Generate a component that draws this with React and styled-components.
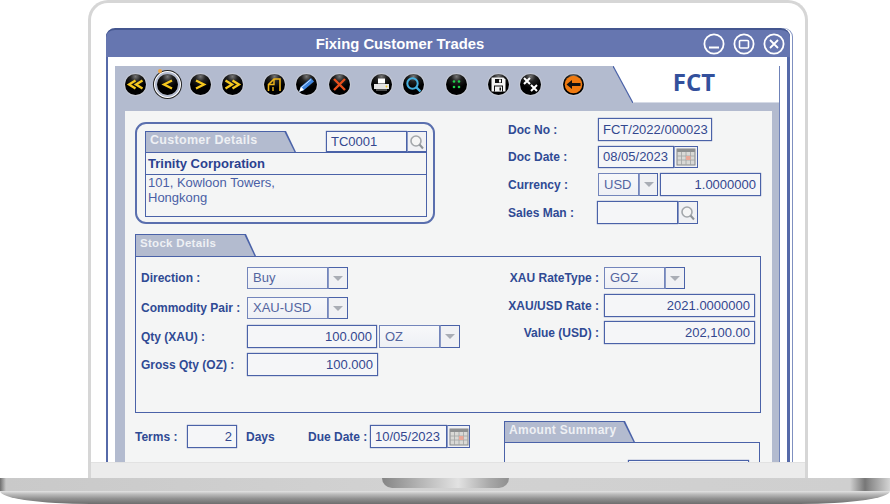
import React from "react";
import styled, { createGlobalStyle } from "styled-components";

const blue = "#4a62a8";
const grey = "#b3bbcf";

const GlobalStyle = createGlobalStyle`
  html, body {
    margin: 0;
    background: #fff;
  }
  body {
    font-family: "Liberation Sans", Arial, sans-serif;
  }
`;

const Page = styled.div`
  width: 890px;
  height: 504px;
  overflow: hidden;
  background: #fff;
`;

const Lid = styled.div`
  box-sizing: border-box;
  width: 720px;
  height: 478px;
  margin-left: 88px;
  border: 3px solid #d6d6d6;
  border-bottom: 0;
  border-radius: 20px 20px 0 0;
  background: #fff;
`;

const Screen = styled.div`
  box-sizing: border-box;
  height: 459px;
  padding: 25px 0 0 15px;
  overflow: hidden;
`;

const Chin = styled.div`
  height: 16px;
  background: #ececec;
  border-top: 1px solid #e2e2e2;
  box-sizing: border-box;
`;

const Base = styled.div`
  position: relative;
  height: 26px;
  overflow: hidden;
  border-radius: 0 0 90px 90px / 0 0 13px 13px;
`;

const BaseTop = styled.div`
  height: 13px;
  background: linear-gradient(
    90deg,
    #6f6f6f 0,
    #c9c9c9 6px,
    #d2d2d2 400px,
    #cfcfcf 850px,
    #777 865px,
    #8c8c8c 870px,
    #d4d4d4 890px
  );
`;

const BaseBottom = styled.div`
  height: 13px;
  background: linear-gradient(180deg, #e3e3e3 0, #bbb 25%, #8f8f8f 60%, #6e6e6e 100%);
`;

const Notch = styled.div`
  position: absolute;
  top: 0;
  left: 382px;
  width: 127px;
  height: 10px;
  border-radius: 0 0 12px 12px;
  background: linear-gradient(90deg, #858585 0, #b5b5b5 30%, #e2e2e2 60%, #a8a8a8 85%, #8f8f8f 100%);
`;

const Window = styled.div`
  box-sizing: border-box;
  width: 684px;
  border-left: 2px solid #566aa9;
  border-right: 3px solid #566aa9;
  border-radius: 9px 9px 0 0;
  background: #fff;
  box-shadow: 2px 0 0 #fff, 3px 0 0 #7f90c0;
`;

const TitleBar = styled.div`
  display: flex;
  align-items: center;
  box-sizing: border-box;
  height: 29px;
  margin: 0 -3px 0 -2px;
  padding-right: 5px;
  border-top: 2px solid #44568f;
  border-radius: 9px 9px 0 0;
  background: #6676b0;
`;

const Title = styled.div`
  flex: 1;
  text-align: center;
  color: #fff;
  font-size: 14.8px;
  font-weight: bold;
`;

const Controls = styled.div`
  display: flex;
  gap: 8px;
  margin-left: 9px;
`;

const Body = styled.div`
  padding: 9px 7px 0;
`;

const Workspace = styled.div`
  background: ${grey};
  border-right: 1px solid #6f82b8;
  padding-bottom: 10px;
`;

const Head = styled.div`
  display: flex;
  justify-content: space-between;
  height: 45px;
`;

const Toolbar = styled.div`
  display: flex;
  gap: 21.3px;
  height: 36px;
  padding-left: 10px;
  align-items: center;
`;

const Group = styled.div`
  display: flex;
  gap: 11.3px;
`;

const Orb = styled.span`
  position: relative;
  display: block;
  width: 21px;
  height: 21px;
  border-radius: 50%;
  background: radial-gradient(circle at 50% 12%, #777 0, #222 24%, #000 55%);
  box-shadow: ${(p) =>
    p.$active
      ? "0 0 0 2px #b3bbcf, 0 0 0 3px #fff, 0 0 0 4px #222"
      : "0 0 0 1px #c4c8d4"};

  svg {
    display: block;
  }
`;

const Spark = styled.span`
  position: absolute;
  top: -5px;
  left: 1px;
  width: 4px;
  height: 4px;
  border-radius: 50%;
  background: #f0a848;
`;

const FctTab = styled.div`
  position: relative;
  box-sizing: border-box;
  display: flex;
  align-items: center;
  justify-content: center;
  width: 166px;
  height: 37px;
  padding: 0 24px 7px 20px;
  color: #33509c;
  font-family: "Open Sans", sans-serif;
  font-size: 24px;
  font-weight: bold;

  svg {
    position: absolute;
    top: 0;
    left: 0;
  }
  span {
    position: relative;
  }
`;

const Panel = styled.div`
  box-sizing: border-box;
  margin: 0 7px 0 10px;
  padding: 7px 11px 0 10px;
  background: #f4f5f5;
`;

const TopRow = styled.div`
  display: flex;
  align-items: flex-start;
`;

const CustomerBox = styled.div`
  box-sizing: border-box;
  width: 300px;
  height: 102px;
  margin-top: 4px;
  padding: 7px 6px 0 8px;
  border: 2px solid #5a6fae;
  border-radius: 11px;
`;

const CustomerHead = styled.div`
  display: flex;
  align-items: flex-start;
  height: 22px;
  box-sizing: border-box;
  border-bottom: 1px solid ${blue};
`;

const Tab = styled.div`
  position: relative;
  isolation: isolate;
  box-sizing: border-box;
  flex: none;
  width: ${(p) => p.$w}px;
  height: ${(p) => p.$h}px;
  padding-left: ${(p) => p.$pad}px;
  line-height: ${(p) => p.$h - 3}px;
  color: #eef0f4;
  font-size: ${(p) => p.$size}px;
  font-weight: bold;
  letter-spacing: 0.3px;
  white-space: nowrap;

  &::before,
  &::after {
    content: "";
    position: absolute;
    z-index: -1;
    clip-path: polygon(0 0, calc(100% - 10px) 0, 100% 100%, 0 100%);
  }
  &::before {
    inset: 0;
    background: ${blue};
  }
  &::after {
    inset: 1px 1.5px 0 1px;
    background: ${grey};
  }
`;

const CustomerName = styled.div`
  box-sizing: border-box;
  height: 22px;
  padding-left: 2px;
  line-height: 21px;
  border-left: 1px solid ${blue};
  border-right: 1px solid ${blue};
  border-bottom: 1px solid ${blue};
  color: #2b418f;
  font-size: 13px;
  font-weight: bold;
`;

const Address = styled.div`
  box-sizing: border-box;
  height: 42px;
  padding-left: 2px;
  line-height: 15px;
  border-left: 1px solid ${blue};
  border-right: 1px solid ${blue};
  border-bottom: 1px solid ${blue};
  color: #4a5fa5;
  font-size: 13px;
`;

const DocFields = styled.div`
  display: flex;
  flex-direction: column;
  margin-left: 73px;
`;

const Row = styled.div`
  display: flex;
  align-items: center;
  margin-top: ${(p) => p.$top || 0}px;
`;

const Label = styled.div`
  box-sizing: border-box;
  width: ${(p) => p.$w}px;
  padding-left: ${(p) => p.$pad || 0}px;
  padding-right: ${(p) => (p.$right ? 5 : 0)}px;
  text-align: ${(p) => (p.$right ? "right" : "left")};
  color: #2f4a94;
  font-size: 12px;
  font-weight: bold;
  white-space: nowrap;
`;

const Field = styled.div`
  box-sizing: border-box;
  flex: none;
  width: ${(p) => p.$w}px;
  height: ${(p) => p.$h || 23}px;
  margin-left: ${(p) => p.$left || 0}px;
  padding: 0 4px;
  line-height: ${(p) => (p.$h || 23) - 2}px;
  text-align: ${(p) => (p.$num ? "right" : "left")};
  border: 1px solid ${blue};
  box-shadow: 0 0 1px ${blue};
  background: #f5f6f8;
  color: #33478f;
  font-size: 13px;
  white-space: nowrap;
`;

const SelectBox = styled(Field)`
  padding-left: 5px;
  border-color: #7385bb;
  box-shadow: none;
  color: #53659f;
  background: linear-gradient(180deg, #f7f8fa, #eef0f5);
`;

const AddOn = styled.div`
  box-sizing: border-box;
  flex: none;
  display: flex;
  align-items: center;
  justify-content: center;
  width: ${(p) => p.$w || 20}px;
  height: ${(p) => p.$h || 23}px;
  border: 1px solid ${blue};
  border-left-color: #8a9ac6;
  background: #f0f1f4;
`;

const Caret = styled.span`
  width: 0;
  height: 0;
  border-left: 5px solid transparent;
  border-right: 5px solid transparent;
  border-top: 5px solid #a9adb5;
`;

const StockBox = styled.div`
  box-sizing: border-box;
  display: flex;
  justify-content: space-between;
  height: 157px;
  padding: 10px 5px 0;
  border: 1px solid ${blue};
`;

const Column = styled.div`
  display: flex;
  flex-direction: column;
`;

const StockTabWrap = styled.div`
  margin-top: 10px;
`;

const BottomRow = styled.div`
  display: flex;
  justify-content: space-between;
  margin-top: 8px;
`;

const TermsRow = styled.div`
  display: flex;
  align-items: center;
  height: 23px;
  margin-top: 4px;
`;

const Amount = styled.div`
  width: 256px;
  margin-right: 1px;
`;

const AmountBox = styled.div`
  box-sizing: border-box;
  height: 60px;
  padding: 17px 10px 0 0;
  border: 1px solid ${blue};
  display: flex;
  justify-content: flex-end;
`;

const Plain = ({ d, color = "#fff", w = 2, fill = "none" }) => (
  <path d={d} stroke={color} strokeWidth={w} fill={fill} strokeLinejoin="miter" />
);

const yellow = "#f6c81e";

const tools = [
  [
    { key: "first", art: <><Plain d="M10.5 6.5 4 10.5 10.5 14.5" color={yellow} w={2.3} /><Plain d="M17.5 6.5 11 10.5 17.5 14.5" color={yellow} w={2.3} /></> },
    { key: "prev", active: true, art: <Plain d="M15 6.5 7 10.5 15 14.5" color={yellow} w={2.3} /> },
    { key: "next", art: <Plain d="M6 6.5 14 10.5 6 14.5" color={yellow} w={2.3} /> },
    { key: "last", art: <><Plain d="M3.5 6.5 10 10.5 3.5 14.5" color={yellow} w={2.3} /><Plain d="M10.5 6.5 17 10.5 10.5 14.5" color={yellow} w={2.3} /></> },
  ],
  [
    { key: "new", art: <><Plain d="M4.5 17V10.5L10 5H16V17" color="#eeb51a" w={1.6} /><Plain d="M10 5V10.5H4.5" color="#eeb51a" w={1.4} /><Plain d="M9 17V13" color="#eeb51a" w={1.4} /></> },
    { key: "edit", art: <><path d="M3 18 5 12.5 15 4 18 7.5 8 16Z" fill="#3f86e0" /><path d="M3 18 5 12.5 8 16Z" fill="#fff" /><path d="M6 13 15 5.5" stroke="#cfe4ff" strokeWidth="1" /></> },
    { key: "delete", art: <Plain d="M5 5 16 16M16 5 5 16" color="#e8501c" w={2.4} /> },
  ],
  [
    { key: "print", art: <><path d="M7 4.5H14V9.5H7Z" fill="#fff" /><path d="M3 10H18V15H3Z" fill="#e4e4e4" /><path d="M5 15.5H16V16.5H5Z" fill="#999" /><circle cx="15.5" cy="12.5" r="1" fill="#f6c81e" /></> },
    { key: "find", art: <><circle cx="9.5" cy="9.5" r="5.2" stroke="#45b0e0" strokeWidth="2" fill="none" /><Plain d="M13.5 13.5 17.5 17.5" color="#45b0e0" w={2.4} /></> },
  ],
  [
    { key: "grid", art: <><circle cx="8" cy="7.5" r="1.3" fill="#1fd14b" /><circle cx="13" cy="7.5" r="1.3" fill="#1fd14b" /><circle cx="8" cy="13" r="1.3" fill="#1fd14b" /><circle cx="13" cy="13" r="1.3" fill="#1fd14b" /></> },
  ],
  [
    { key: "save", art: <><path d="M3.5 3.5H15.5L17.5 5.5V17.5H3.5Z" fill="#f4f4f4" /><path d="M7 5H14V9H7Z" fill="#111" /><path d="M11 5.5H13V8.5H11Z" fill="#f4f4f4" /><path d="M6 11.5H15V17.5H6Z" fill="#111" /><path d="M7 12.5H14V17.5H7Z" fill="#f4f4f4" /><path d="M11.5 13.5H13V16.5H11.5Z" fill="#111" /></> },
    { key: "clear", art: <><Plain d="M4 4 10 10M10 4 4 10" w={2} /><Plain d="M11 11 17 17M17 11 11 17" w={2} /></> },
  ],
  [
    { key: "back", art: <><circle cx="10.5" cy="10.5" r="8.8" fill="#f07a10" /><path d="M3.5 10.5 9 6V9H17.5V12H9V15Z" fill="#111" /></> },
  ],
];

const ToolIcon = ({ tool }) => (
  <Orb $active={tool.active}>
    {tool.active && <Spark />}
    <svg width="21" height="21" viewBox="0 0 21 21">{tool.art}</svg>
  </Orb>
);

const WindowButton = ({ children }) => (
  <svg width="22" height="22" viewBox="0 0 22 22">
    <circle cx="11" cy="11" r="9.6" fill="none" stroke="#fff" strokeWidth="1.8" />
    {children}
  </svg>
);

const Lens = () => (
  <svg width="16" height="16" viewBox="0 0 16 16">
    <circle cx="7" cy="7" r="5" fill="#f5f5f5" stroke="#a3a7ab" strokeWidth="1.6" />
    <path d="M10.5 10.5 14 14.5" stroke="#8f9499" strokeWidth="2" />
  </svg>
);

const Calendar = () => (
  <svg width="20" height="18" viewBox="0 0 20 18">
    <rect x="1" y="1" width="18" height="16" fill="#d9d9d6" stroke="#85888a" />
    <rect x="1" y="1" width="18" height="3" fill="#8d8f90" />
    <path d="M1 8H19M1 12H19M5.5 4V17M10 4V17M14.5 4V17" stroke="#a1a3a3" strokeWidth="0.8" />
    <rect x="10" y="8" width="4.5" height="4" fill="#eaa898" />
  </svg>
);

const Select = ({ value, w, h, dropW }) => (
  <>
    <SelectBox $w={w} $h={h}>{value}</SelectBox>
    <AddOn $w={dropW} $h={h}><Caret /></AddOn>
  </>
);

export default function App() {
  return (
    <Page>
      <GlobalStyle />
      <Lid>
        <Screen>
          <Window>
            <TitleBar>
              <Title>Fixing Customer Trades</Title>
              <Controls>
                <WindowButton><path d="M6 14.5H16" stroke="#fff" strokeWidth="2" /></WindowButton>
                <WindowButton><rect x="6.5" y="7.5" width="9" height="7.5" rx="1" fill="none" stroke="#fff" strokeWidth="1.6" /></WindowButton>
                <WindowButton><path d="M7 7 15 15M15 7 7 15" stroke="#fff" strokeWidth="1.8" /></WindowButton>
              </Controls>
            </TitleBar>
            <Body>
              <Workspace>
                <Head>
                  <Toolbar>
                    {tools.map((group, index) => (
                      <Group key={index}>
                        {group.map((tool) => (
                          <ToolIcon key={tool.key} tool={tool} />
                        ))}
                      </Group>
                    ))}
                  </Toolbar>
                  <FctTab>
                    <svg width="166" height="37" viewBox="0 0 166 37">
                      <polygon points="0,0 166,0 166,37 20,37" fill="#fff" />
                      <path d="M0 0 20 37" stroke="#4a62a8" strokeWidth="1.2" />
                      <path d="M20 36.5H166" stroke="#d5dae6" />
                    </svg>
                    <span>FCT</span>
                  </FctTab>
                </Head>
                <Panel>
                  <TopRow>
                    <CustomerBox>
                      <CustomerHead>
                        <Tab $w={151} $h={21} $pad={5} $size={12.5}>Customer Details</Tab>
                        <Field $w={81} $h={21} $left={30}>TC0001</Field>
                        <AddOn $h={21}><Lens /></AddOn>
                      </CustomerHead>
                      <CustomerName>Trinity Corporation</CustomerName>
                      <Address>101, Kowloon Towers,<br />Hongkong</Address>
                    </CustomerBox>
                    <DocFields>
                      <Row>
                        <Label $w={90}>Doc No :</Label>
                        <Field $w={114}>FCT/2022/000023</Field>
                      </Row>
                      <Row $top={5}>
                        <Label $w={90}>Doc Date :</Label>
                        <Field $w={76} $h={22}>08/05/2023</Field>
                        <AddOn $w={24} $h={22}><Calendar /></AddOn>
                      </Row>
                      <Row $top={5}>
                        <Label $w={90}>Currency :</Label>
                        <SelectBox $w={41}>USD</SelectBox>
                        <AddOn $w={19}><Caret /></AddOn>
                        <Field $w={101} $num $left={2}>1.0000000</Field>
                      </Row>
                      <Row $top={5}>
                        <Label $w={89}>Sales Man :</Label>
                        <Field $w={81} />
                        <AddOn $w={20}><Lens /></AddOn>
                      </Row>
                    </DocFields>
                  </TopRow>

                  <StockTabWrap>
                    <Tab $w={121} $h={22} $pad={5} $size={11.5}>Stock Details</Tab>
                  </StockTabWrap>
                  <StockBox>
                    <Column>
                      <Row>
                        <Label $w={106}>Direction :</Label>
                        <Select value="Buy" w={81} h={22} />
                      </Row>
                      <Row $top={8}>
                        <Label $w={106}>Commodity Pair :</Label>
                        <Select value="XAU-USD" w={81} h={22} />
                      </Row>
                      <Row $top={6}>
                        <Label $w={106}>Qty (XAU) :</Label>
                        <Field $w={130} $num>100.000</Field>
                        <SelectBox $w={61} $left={2}>OZ</SelectBox>
                        <AddOn><Caret /></AddOn>
                      </Row>
                      <Row $top={5}>
                        <Label $w={106}>Gross Qty (OZ) :</Label>
                        <Field $w={131} $num>100.000</Field>
                      </Row>
                    </Column>
                    <Column>
                      <Row>
                        <Label $w={99} $right>XAU RateType :</Label>
                        <Select value="GOZ" w={61} h={22} />
                      </Row>
                      <Row $top={5}>
                        <Label $w={99} $right>XAU/USD Rate :</Label>
                        <Field $w={151} $num>2021.0000000</Field>
                      </Row>
                      <Row $top={4}>
                        <Label $w={99} $right>Value (USD) :</Label>
                        <Field $w={151} $num>202,100.00</Field>
                      </Row>
                    </Column>
                  </StockBox>

                  <BottomRow>
                    <TermsRow>
                      <Label $w={52}>Terms :</Label>
                      <Field $w={50} $num>2</Field>
                      <Label $w={71} $pad={9}>Days</Label>
                      <Label $w={59}>Due Date :</Label>
                      <Field $w={77} $left={3}>10/05/2023</Field>
                      <AddOn $w={23}><Calendar /></AddOn>
                    </TermsRow>
                    <Amount>
                      <Tab $w={131} $h={21} $pad={5} $size={12}>Amount Summary</Tab>
                      <AmountBox>
                        <Field $w={121} />
                      </AmountBox>
                    </Amount>
                  </BottomRow>
                </Panel>
              </Workspace>
            </Body>
          </Window>
        </Screen>
        <Chin />
      </Lid>
      <Base>
        <BaseTop />
        <BaseBottom />
        <Notch />
      </Base>
    </Page>
  );
}
